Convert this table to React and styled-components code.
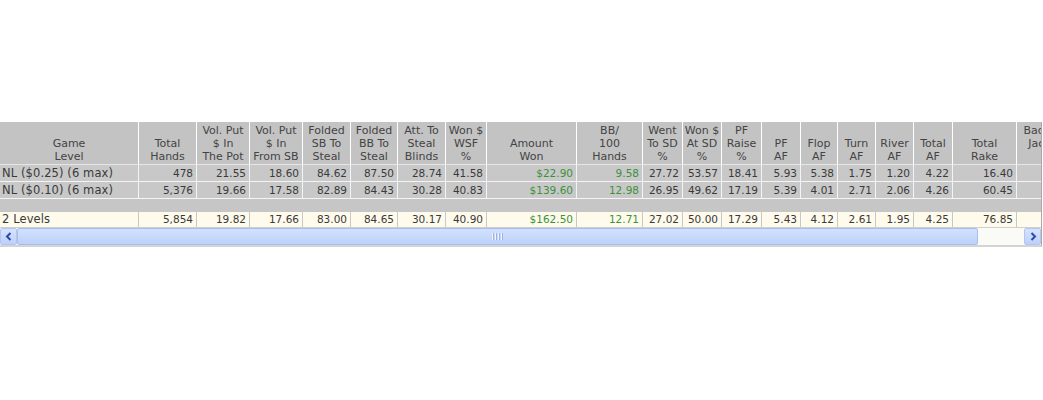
import React from "react";
import styled, { createGlobalStyle } from "styled-components";

const GlobalStyle = createGlobalStyle`
  html, body {
    margin: 0;
    padding: 0;
    background: #ffffff;
  }
  body {
    font-family: "DejaVu Sans", Verdana, sans-serif;
    color: #3a3a3a;
  }
`;

// column widths, left to right (each includes its 1px right rule)
const widths = [139, 58, 53, 53, 48, 47, 48, 41, 90, 66, 40, 39, 40, 39, 37, 38, 38, 39, 64, 64];
const cols = widths.map((w) => `${w}px`).join(" ");

const headers = [
  ["Game", "Level"],
  ["Total", "Hands"],
  ["Vol. Put", "$ In", "The Pot"],
  ["Vol. Put", "$ In", "From SB"],
  ["Folded", "SB To", "Steal"],
  ["Folded", "BB To", "Steal"],
  ["Att. To", "Steal", "Blinds"],
  ["Won $", "WSF", "%"],
  ["Amount", "Won"],
  ["BB/", "100", "Hands"],
  ["Went", "To SD", "%"],
  ["Won $", "At SD", "%"],
  ["PF", "Raise", "%"],
  ["PF", "AF"],
  ["Flop", "AF"],
  ["Turn", "AF"],
  ["River", "AF"],
  ["Total", "AF"],
  ["Total", "Rake"],
  ["Bad Beat", "Jackpot", "($)"],
];

const rows = [
  ["NL ($0.25) (6 max)", "478", "21.55", "18.60", "84.62", "87.50", "28.74", "41.58", "$22.90", "9.58", "27.72", "53.57", "18.41", "5.93", "5.38", "1.75", "1.20", "4.22", "16.40", ""],
  ["NL ($0.10) (6 max)", "5,376", "19.66", "17.58", "82.89", "84.43", "30.28", "40.83", "$139.60", "12.98", "26.95", "49.62", "17.19", "5.39", "4.01", "2.71", "2.06", "4.26", "60.45", ""],
];

const totals = ["2 Levels", "5,854", "19.82", "17.66", "83.00", "84.65", "30.17", "40.90", "$162.50", "12.71", "27.02", "50.00", "17.29", "5.43", "4.12", "2.61", "1.95", "4.25", "76.85", ""];

// money columns are shown in green
const greenCols = [8, 9];

export default function App() {
  return (
    <Page>
      <GlobalStyle />
      <Frame>
        <Grid>
          <HeadRow>
            {headers.map((lines, i) => (
              <HeadCell key={i}>
                {lines.map((l, j) => (
                  <span key={j}>{l}</span>
                ))}
              </HeadCell>
            ))}
          </HeadRow>
          {rows.map((r, ri) => (
            <DataRow key={ri}>
              {r.map((v, i) => (
                <Cell key={i} $left={i === 0} $green={greenCols.includes(i)}>
                  {v}
                </Cell>
              ))}
            </DataRow>
          ))}
          <Spacer />
          <TotalRow>
            {totals.map((v, i) => (
              <TotalCell key={i} $left={i === 0} $green={greenCols.includes(i)}>
                {v}
              </TotalCell>
            ))}
          </TotalRow>
        </Grid>
        <ScrollBar>
          <ArrowBtn>
            <svg width="8" height="9" viewBox="0 0 8 9">
              <path d="M5.5 1 L2 4.5 L5.5 8" fill="none" stroke="#2b4aa8" strokeWidth="2" />
            </svg>
          </ArrowBtn>
          <Track>
            <Thumb>
              <Grip>
                <i />
                <i />
                <i />
                <i />
              </Grip>
            </Thumb>
          </Track>
          <ArrowBtn>
            <svg width="8" height="9" viewBox="0 0 8 9">
              <path d="M2.5 1 L6 4.5 L2.5 8" fill="none" stroke="#2b4aa8" strokeWidth="2" />
            </svg>
          </ArrowBtn>
        </ScrollBar>
      </Frame>
    </Page>
  );
}

const Page = styled.div`
  padding-top: 122px;
  width: 1043px;
  height: 400px;
  box-sizing: border-box;
`;

const Frame = styled.div`
  width: 1042px;
  overflow: hidden;
  border-right: 1px solid #a9a9a9;
  border-bottom: 2px solid #d4d4d4;
  box-sizing: border-box;
`;

const Grid = styled.div`
  width: 1081px;
`;

const RowBase = styled.div`
  display: grid;
  grid-template-columns: ${cols};
`;

const HeadRow = styled(RowBase)`
  background: #c3c3c3;
  height: 43px;
`;

const HeadCell = styled.div`
  display: flex;
  flex-direction: column;
  justify-content: flex-end;
  align-items: center;
  box-sizing: border-box;
  border-right: 1px solid #ffffff;
  border-bottom: 1px solid #e6e6e6;
  padding-bottom: 1px;
  font-size: 11px;
  line-height: 13px;
  color: #444444;
  white-space: nowrap;

  span {
    display: block;
    text-align: center;
  }
`;

const DataRow = styled(RowBase)`
  background: #c8c8c8;
  height: 17px;
`;

const Cell = styled.div`
  box-sizing: border-box;
  border-right: 1px solid #f4f4f4;
  border-bottom: 1px solid #f4f4f4;
  padding: 0 ${(p) => (p.$left ? "0 0 2px" : "3px 0 0")};
  text-align: ${(p) => (p.$left ? "left" : "right")};
  font-size: ${(p) => (p.$left ? "11.5px" : "10.5px")};
  letter-spacing: ${(p) => (p.$left ? "0.1px" : "0")};
  line-height: 16px;
  color: ${(p) => (p.$green ? "#3b923b" : "#3a3a3a")};
  white-space: nowrap;
  overflow: hidden;
`;

const Spacer = styled.div`
  height: 13px;
  background: #c6c6c6;
`;

const TotalRow = styled(RowBase)`
  background: #fffbec;
  height: 15px;
  border-bottom: 1px solid #cfcfcf;
`;

const TotalCell = styled(Cell)`
  border-right: 1px solid #c8c8c8;
  border-bottom: none;
  line-height: 14px;
`;

const ScrollBar = styled.div`
  display: flex;
  height: 17px;
  background: #fafaf7;
`;

const ArrowBtn = styled.div`
  width: 17px;
  height: 17px;
  box-sizing: border-box;
  display: flex;
  align-items: center;
  justify-content: center;
  background: linear-gradient(#d6e3fd, #bcd0fa);
  border: 1px solid #b3c6ef;
  border-radius: 2px;
`;

const Track = styled.div`
  flex: 1;
  display: flex;
  padding-right: 46px;
`;

const Thumb = styled.div`
  flex: 1;
  box-sizing: border-box;
  border: 1px solid #a7bdec;
  border-radius: 2px;
  background: linear-gradient(#d3e1fd, #bcd1fa);
  display: flex;
  align-items: center;
  justify-content: center;
`;

const Grip = styled.div`
  display: flex;
  gap: 1px;

  i {
    display: block;
    width: 1px;
    height: 7px;
    background: #eef3fe;
    border-right: 1px solid #9cb2e4;
  }
`;
